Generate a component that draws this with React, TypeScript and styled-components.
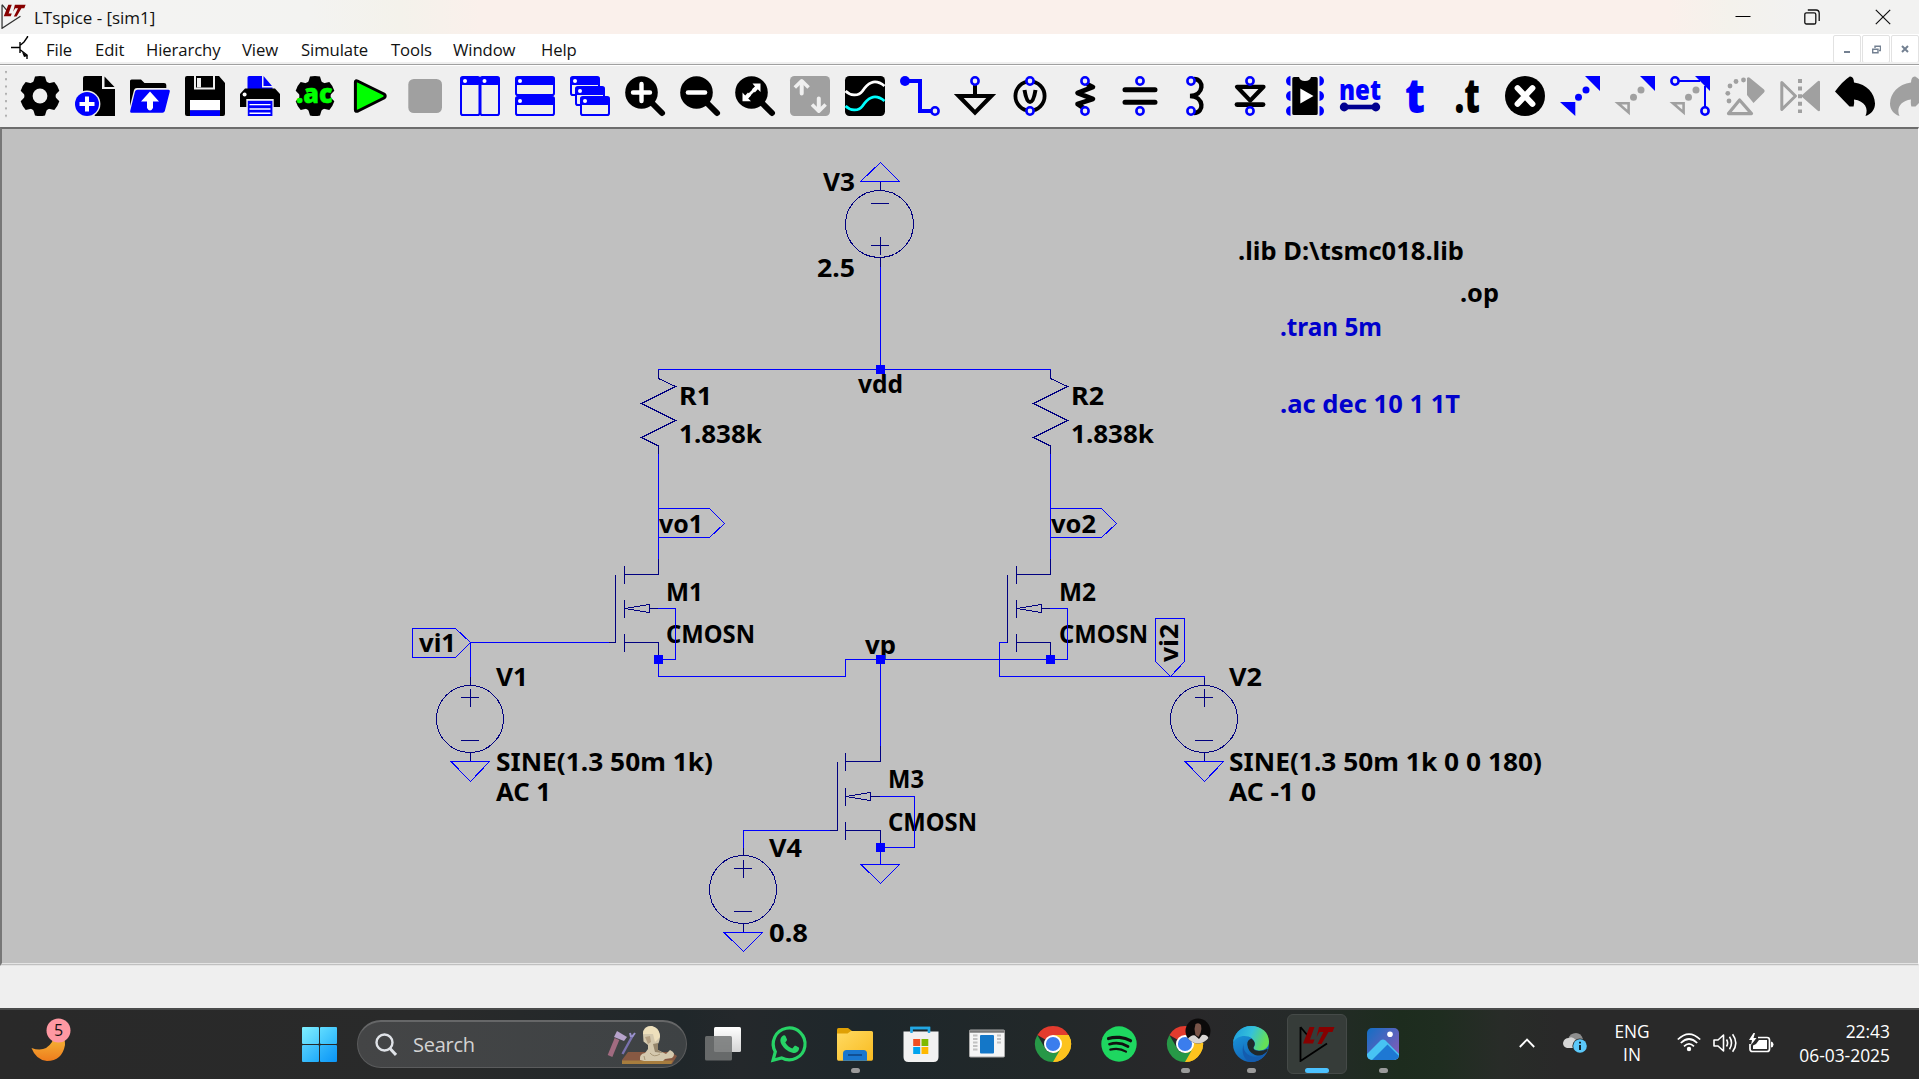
import React from 'react';
import styled, { createGlobalStyle } from 'styled-components';

const BLUE = '#0000ff';
const NAVY = '#000080';
const GREY = '#a0a0a0';
const FACE = '#efefef';
const UI_FONT = '"Open Sans", "Noto Sans", sans-serif';

const GlobalStyle = createGlobalStyle`
  * { box-sizing: border-box; }
  html, body { margin: 0; padding: 0; overflow: hidden; background: ${FACE}; }
  svg { display: block; flex: none; }
`;

const Desktop = styled.div`
  width: 1919px;
  height: 1079px;
  display: grid;
  grid-template-rows: 34px 28px 4px 61px 839px 42px 71px;
  grid-template-columns: 1919px;
  overflow: hidden;
  font-family: ${UI_FONT};
  background: ${FACE};
`;

/* ---------- title bar and menu ---------- */

const TitleBar = styled.header`
  display: flex;
  align-items: center;
  background: linear-gradient(90deg, #f3f3f3 0, #f3f3f1 310px, #f4f2eb 400px, #faf0eb 480px, #faf0eb 1670px, #f4f2ec 1730px, #f2f2f1 1800px);
`;

const AppMark = styled.div`
  width: 34px;
  height: 34px;
  padding: 4px 0 0 1px;
`;

const TitleText = styled.div`
  flex: 1;
  font-size: 17px;
  line-height: 34px;
  color: #111;
  letter-spacing: -0.05px;
  padding-top: 1px;
`;

const WindowButton = styled.div<{ $w: number }>`
  width: ${(p) => p.$w}px;
  height: 34px;
  display: flex;
  align-items: center;
  justify-content: center;
`;

const MenuBar = styled.nav`
  display: flex;
  align-items: flex-start;
  background: #fff;
`;

const MenuMark = styled.div`
  width: 46px;
  height: 28px;
  padding: 2px 0 0 11px;
`;

const MenuItem = styled.div<{ $w: number }>`
  width: ${(p) => p.$w}px;
  font-size: 16.7px;
  line-height: 31px;
  color: #111;
  white-space: nowrap;
  letter-spacing: -0.1px;
`;

const Spacer = styled.div`
  flex: 1;
`;

const MdiButtons = styled.div`
  display: flex;
  gap: 1px;
  padding-top: 1px;
`;

const MdiButton = styled.div`
  width: 28px;
  height: 28px;
  border: 1px solid #e2e2e2;
  border-radius: 2px;
  background: #fff;
  display: flex;
  align-items: center;
  justify-content: center;
`;

const Groove = styled.div`
  border-bottom: 1px solid #fff;
  background: linear-gradient(${FACE} 0 2px, ${GREY} 2px 3px);
`;

/* ---------- toolbar ---------- */

const ToolBar = styled.div`
  display: flex;
  align-items: flex-start;
  padding: 10px 0 0 4px;
  overflow: hidden;
  background: ${FACE};
`;

const Grip = styled.div`
  width: 16px;
  height: 52px;
  margin-top: -6px;
  flex: none;
  background: radial-gradient(circle at 2px 2px, #b0b0b0 0 1px, transparent 1.4px) 0 0 / 16px 7.3px repeat-y;
`;

const ToolButton = styled.div`
  width: 40px;
  height: 40px;
  margin-right: 15px;
  flex: none;
`;

const IconText = styled.text`
  font-family: 'Open Sans', sans-serif;
  font-weight: 800;
`;

function Icon({ children }: { children: React.ReactNode }) {
  return (
    <svg width="40" height="40" viewBox="0 0 40 40" fill="none" overflow="visible">
      {children}
    </svg>
  );
}

const Gear = () => (
  <g fill="#000">
    <circle cx="20" cy="20" r="15.7" />
    {[0, 60, 120, 180, 240, 300].map((a) => (
      <path key={a} d="M15 0.6Q20 -0.6 25 0.6L27 7H13Z" transform={`rotate(${a} 20 20)`} />
    ))}
  </g>
);

const Pin = ({ x, y }: { x: number; y: number }) => (
  <ellipse cx={x} cy={y} rx="3.6" ry="3.7" fill={FACE} stroke={BLUE} strokeWidth="2.6" />
);

const MiniWindow = ({ x, y, w, h }: { x: number; y: number; w: number; h: number }) => (
  <g>
    <rect x={x + 1} y={y + 1} width={w - 2} height={h - 2} rx="1.8" fill={FACE} stroke={BLUE} strokeWidth="2" />
    <rect x={x + 1} y={y + 1} width={w - 2} height="8" rx="1.5" fill={BLUE} />
    <circle cx={x + 5} cy={y + 5} r="2" fill="#fff" />
  </g>
);

const Lens = () => (
  <g>
    <path d="M27 27L37 37" stroke="#000" strokeWidth="6" strokeLinecap="round" />
    <circle cx="16.5" cy="16.5" r="16.3" fill="#000" />
  </g>
);

const Dots = ({ color }: { color: string }) => (
  <g fill={color}>
    <circle cx="18.5" cy="21.2" r="3.5" />
    <circle cx="26" cy="14" r="3.5" />
  </g>
);

const UndoShape = ({ color }: { color: string }) => (
  <path d="M0 15.6Q7 5.5 14.8 0.4Q18.8 0 19 6.6C32 8.5 39.5 17 40 27.5C40 33.5 36.5 38 30.5 40C33.8 33 30 25 19 23.6Q19.6 28 18.6 30.4L14.5 30.6Z" fill={color} />
);

const tools: React.ReactNode[] = [
  <><Gear /><circle cx="20" cy="20" r="7.4" fill={FACE} /></>,
  <>
    <path d="M8 2Q8 0 10 0H27V13H40V40H20L8 22Z" fill="#000" />
    <path d="M29.5 0.5L39.5 11H29.5Z" fill="#000" />
    <circle cx="12" cy="28" r="13.4" fill={FACE} />
    <circle cx="12" cy="28" r="12" fill={BLUE} />
    <path d="M12 20.5V35.5M4.5 28H19.5" stroke="#fff" strokeWidth="4" />
  </>,
  <>
    <path d="M0 5Q0 3.4 1.6 3.4H11L14.5 7H34Q36.3 7 36.3 9V12H7Q4.5 12 4 14L0 30Z" fill="#000" />
    <path d="M7.5 13.8H38.5Q40.2 13.8 39.8 15.5L34.8 35Q34.3 36.8 32.5 36.8H1.2Q-0.3 36.8 0.2 35L5 15.5Q5.5 13.8 7.5 13.8Z" fill={BLUE} />
    <path d="M20 15.5L29 25.5H23V32Q20 37 17 32V25.5H11Z" fill="#fff" />
  </>,
  <>
    <path d="M0 2Q0 0 2 0H34L40 7V38Q40 40 38 40H2Q0 40 0 38Z" fill="#000" />
    <path d="M9 0V13.4H30V0H28V11.4H11V0Z" fill={FACE} />
    <rect x="12" y="2" width="4" height="9.4" fill={FACE} />
    <rect x="5" y="24" width="30" height="10.5" fill="#fff" />
    <rect x="5" y="34.3" width="30" height="5.7" fill={BLUE} />
  </>,
  <>
    <path d="M7.5 13V1.5Q7.5 0 9 0H22V11.5H32.5V13Z" fill={BLUE} />
    <path d="M23.5 0L32 10H23.5Z" fill={BLUE} />
    <path d="M5 12.5H35L40 18V31H0V18Z" fill="#000" />
    <circle cx="4.6" cy="18.5" r="2" fill="#fff" />
    <rect x="6.3" y="23" width="27.4" height="17" fill={FACE} />
    <rect x="7.8" y="24.8" width="24.6" height="15.2" fill={BLUE} />
    <path d="M9.5 28.6H30.5M9.5 33H30.5M9.5 37.2H30.5" stroke="#fff" strokeWidth="1.4" />
  </>,
  <>
    <Gear />
    <IconText x="1" y="27.3" fontSize="27" fill="#00ff00" stroke="#00ff00" strokeWidth="0.5" textLength="36.5" lengthAdjust="spacingAndGlyphs">.ac</IconText>
  </>,
  <path d="M5.4 6Q5.4 4 7.5 5L34 18Q36.5 20 34 22L8 35Q5.4 36 5.4 34Z" fill="#00ff00" stroke="#000" strokeWidth="3" strokeLinejoin="round" />,
  <rect x="3.3" y="3" width="33.7" height="34" rx="5.5" fill={GREY} />,
  <><MiniWindow x={0} y={0} w={20.5} h={40} /><MiniWindow x={19.5} y={0} w={20.5} h={40} /></>,
  <><MiniWindow x={0} y={0} w={40} h={20} /><MiniWindow x={0} y={20} w={40} h={20} /></>,
  <><MiniWindow x={0} y={0} w={30} h={20} /><MiniWindow x={5} y={10} w={30} h={20} /><MiniWindow x={10} y={20} w={30} h={20} /></>,
  <><Lens /><path d="M16.5 8V25M8 16.5H25" stroke="#fff" strokeWidth="4.4" strokeLinecap="round" /></>,
  <><Lens /><path d="M8 16.5H25" stroke="#fff" strokeWidth="4.6" strokeLinecap="round" /></>,
  <>
    <Lens />
    <path d="M11 22L22 11" stroke="#fff" strokeWidth="2.8" />
    <path d="M17.5 7.5H25.5V16L22.8 13.2L19.8 16.4L17 13.2L20 10.4ZM7.5 16.5V25.3H16L13.2 22.5L16 19.4L13 16.6L10.2 19.4Z" fill="#fff" />
  </>,
  <>
    <rect width="40" height="40" rx="4.5" fill={GREY} />
    <path d="M11.7 6V17.5M28.8 22.5V34" stroke={FACE} strokeWidth="4" strokeLinecap="round" />
    <path d="M4.8 11.5L11.7 4.8L18.6 11.5M22 28.5L28.8 35.2L35.6 28.5" stroke={FACE} strokeWidth="3.6" strokeLinejoin="round" />
  </>,
  <>
    <rect width="40" height="40" rx="4.5" fill="#000" />
    <path d="M0.5 15C5 19.5 13 21 17.5 15C22 8 29 1.5 39.5 10" stroke="#fff" strokeWidth="2.8" />
    <path d="M0.5 30C5 34.5 13 36 17.5 30C22 23 29 16.5 39.5 25" stroke="#00ffff" strokeWidth="2.8" />
  </>,
  <>
    <path d="M5 5H20V35H32" stroke={BLUE} strokeWidth="4" />
    <circle cx="5" cy="5" r="5" fill={BLUE} />
    <Pin x={35} y={35} />
  </>,
  <>
    <path d="M20 9V20" stroke="#000" strokeWidth="4" />
    <path d="M3.8 20H36.2L20 36.6Z" stroke="#000" strokeWidth="4.2" />
    <Pin x={20} y={5} />
  </>,
  <>
    <circle cx="20" cy="20" r="14.6" stroke="#000" strokeWidth="3.8" />
    <path d="M14.5 14Q16.5 26 20 26Q23.5 26 25.5 14" stroke="#000" strokeWidth="4" />
    <Pin x={20} y={5} /><Pin x={20} y={35} />
  </>,
  <>
    <path d="M22 8L28 11L12.5 17L28 23L12.5 28L20 33" stroke="#000" strokeWidth="4.6" strokeLinejoin="round" />
    <Pin x={20} y={5} /><Pin x={20} y={35} />
  </>,
  <>
    <path d="M5 13.8H35M5 26.3H35" stroke="#000" strokeWidth="5" strokeLinecap="round" />
    <Pin x={20} y={5} /><Pin x={20} y={35} />
  </>,
  <>
    <path d="M19 3C29.5 3 29.5 19.5 15 20C29.5 20.5 29.5 37 19 37" stroke="#000" strokeWidth="4.4" />
    <Pin x={16} y={5} /><Pin x={16} y={35} />
  </>,
  <>
    <path d="M7 10.8H33.5L20.2 24.6Z" stroke="#000" strokeWidth="4.2" strokeLinejoin="round" />
    <path d="M7 28.6H33" stroke="#000" strokeWidth="4.8" strokeLinecap="round" />
    <Pin x={20} y={5} /><Pin x={20} y={35} />
  </>,
  <>
    {[5, 20, 35].map((y) => (
      <g key={y} fill={BLUE}>
        <circle cx="6" cy={y} r="5" />
        <circle cx="34" cy={y} r="5" />
      </g>
    ))}
    <rect x="5.5" width="29" height="40" fill={FACE} />
    <path d="M7.3 2.5Q7.3 1 9 1H14Q15 5 20 5Q25 5 26 1H31Q32.7 1 32.7 2.5V37.5Q32.7 39 31 39H9Q7.3 39 7.3 37.5Z" fill="#000" />
    <path d="M15.3 12.5L28.5 20L15.3 27.5Z" fill="#fff" />
  </>,
  <>
    <IconText x="-1" y="24" fontSize="27.5" fill={BLUE} textLength="42" lengthAdjust="spacingAndGlyphs">net</IconText>
    <path d="M4 31H36" stroke="#000090" strokeWidth="4.6" />
    <g fill="#000090"><circle cx="4.2" cy="31" r="4.4" /><circle cx="35.8" cy="31" r="4.4" /></g>
  </>,
  <IconText x="10" y="36.5" fontSize="48" fill={BLUE} textLength="20" lengthAdjust="spacingAndGlyphs">t</IconText>,
  <IconText x="4.5" y="36.5" fontSize="48" fill="#000" textLength="25.5" lengthAdjust="spacingAndGlyphs">.t</IconText>,
  <>
    <circle cx="20" cy="20" r="20" fill="#000" />
    <path d="M12.5 12L27.5 28M27.5 12L12.5 28" stroke="#fff" strokeWidth="5.8" strokeLinecap="round" />
  </>,
  <><path d="M0 26H15.3V40ZM25 0H40V15Z" fill={BLUE} /><Dots color={BLUE} /></>,
  <>
    <path d="M3 27.2H13.6V36.4Z" stroke={GREY} strokeWidth="2.6" />
    <path d="M25 0H40V15Z" fill={BLUE} />
    <Dots color={GREY} />
  </>,
  <>
    <path d="M3 27.2H13.6V36.4Z" stroke={GREY} strokeWidth="2.6" />
    <path d="M25 0H40V15Z" fill={BLUE} />
    <path d="M8 5H30M35 10V32" stroke={BLUE} strokeWidth="2" />
    <Dots color={GREY} />
    <Pin x={5} y={5} /><Pin x={35} y={35} />
  </>,
  <>
    <path d="M22 2Q23.5 0.4 25 2L39 13.5Q40.5 15 39 16.5L28.5 27L22 19Z" fill={GREY} />
    <path d="M3.5 37.6L14.6 24L26.5 37.6Z" stroke={GREY} strokeWidth="3.2" strokeLinejoin="round" />
    <g fill={GREY}>
      {[[18.5, 4], [11, 5.5], [5, 10], [2.8, 17.3], [4, 25]].map(([x, y]) => <circle key={x} cx={x} cy={y} r="2.4" />)}
    </g>
  </>,
  <>
    <path d="M1.8 6.5L15.5 20L1.8 33.5Z" stroke={GREY} strokeWidth="3" strokeLinejoin="round" />
    <path d="M40 5.5V34.5Q39 36 37.5 34.5L21 20L37.5 5.5Q39 4 40 5.5Z" fill={GREY} />
    <path d="M20 3V37" stroke={GREY} strokeWidth="4" strokeDasharray="4 3.6" />
  </>,
  <UndoShape color="#000" />,
  <g transform="translate(40 0) scale(-1 1)"><UndoShape color={GREY} /></g>,
];

/* ---------- schematic ---------- */

const Sheet = styled.main`
  border-left: 2px solid #777;
  border-top: 2px solid #6c6c6c;
  border-right: 1px solid #fff;
  border-bottom: 3px double #e4e4e4;
  background: #c0c0c0;
  overflow: hidden;
`;

const Drawing = styled.svg`
  shape-rendering: crispEdges;
  fill: none;
  stroke-width: 1;
`;

const Label = styled.text`
  font-family: 'Noto Sans', 'Open Sans', sans-serif;
  font-weight: 700;
  font-size: 25px;
  stroke: none;
`;

const Wire = styled.path`
  stroke: ${BLUE};
`;

const Part = styled.path`
  stroke: ${NAVY};
`;

const labels: { t: string; x: number; y: number; w: number; c?: string }[] = [
  { t: 'V3', x: 823, y: 191, w: 30 },
  { t: '2.5', x: 817, y: 277, w: 36 },
  { t: 'vdd', x: 858, y: 393, w: 43 },
  { t: 'R1', x: 679, y: 405, w: 31 },
  { t: '1.838k', x: 679, y: 443, w: 81 },
  { t: 'R2', x: 1071, y: 405, w: 31 },
  { t: '1.838k', x: 1071, y: 443, w: 81 },
  { t: 'vo1', x: 659, y: 533, w: 42 },
  { t: 'vo2', x: 1051, y: 533, w: 43 },
  { t: 'M1', x: 666, y: 601, w: 35 },
  { t: 'CMOSN', x: 666, y: 643, w: 87 },
  { t: 'M2', x: 1059, y: 601, w: 35 },
  { t: 'CMOSN', x: 1059, y: 643, w: 87 },
  { t: 'vi1', x: 419, y: 652, w: 35 },
  { t: 'vp', x: 865, y: 654, w: 29 },
  { t: 'V1', x: 496, y: 686, w: 30 },
  { t: 'SINE(1.3 50m 1k)', x: 496, y: 771, w: 215 },
  { t: 'AC 1', x: 496, y: 801, w: 53 },
  { t: 'M3', x: 888, y: 788, w: 34 },
  { t: 'CMOSN', x: 888, y: 831, w: 87 },
  { t: 'V2', x: 1229, y: 686, w: 31 },
  { t: 'SINE(1.3 50m 1k 0 0 180)', x: 1229, y: 771, w: 311 },
  { t: 'AC -1 0', x: 1229, y: 801, w: 85 },
  { t: 'V4', x: 769, y: 857, w: 31 },
  { t: '0.8', x: 769, y: 942, w: 37 },
  { t: '.lib D:\\tsmc018.lib', x: 1238, y: 260, w: 224 },
  { t: '.op', x: 1460, y: 302, w: 37 },
  { t: '.tran 5m', x: 1280, y: 336, w: 100, c: '#0000cc' },
  { t: '.ac dec 10 1 1T', x: 1280, y: 413, w: 178, c: '#0000cc' },
];

const Junction = ({ x, y }: { x: number; y: number }) => <rect x={x - 4.5} y={y - 4.5} width="9" height="9" fill={BLUE} />;

const Ground = ({ x, y, h = 20 }: { x: number; y: number; h?: number }) => <Wire d={`M${x - 19.5} ${y}H${x + 19}L${x} ${y + h}Z`} />;

const Source = ({ x, y, ry = 33.5 }: { x: number; y: number; ry?: number }) => (
  <g>
    <ellipse cx={x - 0.5} cy={y} rx="33.5" ry={ry} stroke={NAVY} />
    <Part d={`M${x - 9.5} ${y - 21.5}H${x + 8.5}M${x} ${y - 30}V${y - 12}M${x - 9.5} ${y + 21.5}H${x + 8.5}M${x} ${y + ry}V${y + ry + 9}`} />
  </g>
);

const Resistor = ({ x }: { x: number }) => (
  <Part d={`M${x} 370V378.5L${x + 17} 386.5L${x - 17} 403.5L${x + 17} 420.5L${x - 17} 437.5L${x} 446V454`} />
);

const Mosfet = ({ x, y, p, gate, plate = 9 }: { x: number; y: number; p: number; gate: number; plate?: number }) => {
  const t = x - gate;
  const low = Math.floor(y + 2 * p) + 0.5;
  const mid = Math.floor(y + p) + 0.5;
  return (
    <Part
      d={`M${x} ${y - 16}V${y}H${t}M${t} ${y - 9}V${y + 9}M${t} ${mid - 9}V${mid + 9}M${t} ${low - 9}V${low + 9}
        M${t - plate} ${y}V${low}M${t - 17} ${low}H${t - plate + 0.5}M${t} ${low}H${x}V${low + 14}
        M${t} ${mid}L${t + 25} ${mid - 4}V${mid + 4}ZM${t + 25} ${mid}H${x}`}
    />
  );
};

const Schematic = () => (
  <Drawing width="1916" height="834" viewBox="2 129 1916 834">
    {labels.map((l) => (
      <Label key={`${l.t}-${l.x}`} x={l.x} y={l.y + 0.3} fill={l.c ?? '#000'} textLength={l.w + 2} lengthAdjust="spacingAndGlyphs">
        {l.t}
      </Label>
    ))}
    <Label transform="translate(1178 662) rotate(-90)" fill="#000" textLength="38" lengthAdjust="spacingAndGlyphs">vi2</Label>

    <Wire d="M860.5 181.5H899.5L880.5 162.5Z" />
    <Part d="M880.5 182V190M871 203.5H889M871 245.5H889M880.5 237V255M880.5 257V267" />
    <ellipse cx="879.5" cy="224" rx="34" ry="33.5" stroke={NAVY} />
    <Wire d="M880.5 267V369.5M658.5 378V369.5H1050.5V378" />
    <Resistor x={658.5} />
    <Resistor x={1050.5} />
    <Wire d="M658.5 454V559M1050.5 454V559" />
    <Wire d="M658.5 508.5H709.5L724.5 523.5L709.5 537.5H658.5M1050.5 508.5H1101.5L1116.5 523.5L1101.5 537.5H1050.5" />
    <Mosfet x={658.5} y={574.5} p={34} gate={34} />
    <Mosfet x={1050.5} y={574.5} p={34} gate={34} />
    <Mosfet x={880.5} y={761.5} p={34.5} gate={35} plate={8} />
    <Wire d="M658 608.5H675.5V659.5H658.5M1050 608.5H1067.5V659.5" />
    <Wire d="M658.5 659.5V676.5H845.5V659.5H1067.5" />
    <Wire d="M412.5 628.5H455.5L470.5 642.5L455.5 657.5H412.5Z" />
    <Wire d="M609 642.5H470.5V677" />
    <Part d="M470.5 677V686M743.5 847V856M1204.5 677V686" />
    <Source x={470.5} y={719} />
    <Ground x={470.5} y={761.5} />
    <Wire d="M1007 642.5H999.5V676.5H1204.5V678" />
    <Wire d="M1155.5 618.5H1184.5V661.5L1170.5 676.5L1155.5 661.5Z" />
    <Source x={1204.5} y={719} />
    <Ground x={1204.5} y={761.5} />
    <Wire d="M880.5 659.5V746M880 796.5H914.5V847.5H880.5V864.5" />
    <Ground x={880.5} y={864.5} h={19} />
    <Wire d="M830 830.5H743.5V848" />
    <Source x={743.5} y={889.5} ry={34} />
    <Ground x={743.5} y={932.5} h={19} />
    <Junction x={880.5} y={369.5} />
    <Junction x={658.5} y={659.5} />
    <Junction x={880.5} y={659.5} />
    <Junction x={1050.5} y={659.5} />
    <Junction x={880.5} y={847.5} />
  </Drawing>
);

const StatusBar = styled.div`
  background: ${FACE};
`;

/* ---------- taskbar ---------- */

const TaskBar = styled.footer`
  display: flex;
  border-top: 2px solid #4a4b4b;
  background: linear-gradient(90deg, #292929 0, #292a2a 440px, #20272a 680px, #24282b 740px, #1e272b 870px, #222829 1050px, #29282a 1190px, #252a29 1300px, #1d2c1e 1400px, #1f2d20 1440px, #282c28 1500px, #292929 1560px);
`;

const Widget = styled.div`
  width: 302px;
  padding: 10px 0 0 28px;
`;

const BadgeText = styled.text`
  font-family: ${UI_FONT};
  font-size: 16px;
  fill: #111;
`;

const StartButton = styled.div`
  width: 35px;
  height: 35px;
  margin: 17px 20px 0 0;
  display: grid;
  grid-template-columns: 1fr 1fr;
  gap: 1px;
`;

const Pane = styled.div<{ $from: string; $to: string }>`
  border-radius: 1px;
  background: linear-gradient(135deg, ${(p) => p.$from}, ${(p) => p.$to});
`;

const SearchBox = styled.div`
  width: 330px;
  height: 48px;
  margin: 10px 3px 0 0;
  padding: 0 8px 0 17px;
  border: 1px solid #5b5c5d;
  border-top: 2px solid #666768;
  border-radius: 24px;
  background: linear-gradient(90deg, #444546, #3e4244);
  display: flex;
  align-items: center;
  color: #d3d3d3;
  font-size: 20px;
`;

const SearchLabel = styled.span`
  flex: 1;
  padding: 0 0 1px 16px;
  letter-spacing: -0.25px;
`;

const TaskButton = styled.div<{ $active?: boolean }>`
  width: 60px;
  height: 60px;
  margin: 4px 3px 0;
  flex: none;
  border-radius: 6px;
  border: 1px solid ${(p) => (p.$active ? '#454a48' : 'transparent')};
  background: ${(p) => (p.$active ? '#363c39' : 'transparent')};
  display: flex;
  flex-direction: column;
  align-items: center;
  padding-top: 8px;
`;

const Indicator = styled.div<{ $active?: boolean }>`
  width: ${(p) => (p.$active ? 24 : 9)}px;
  height: 5px;
  margin-top: 3px;
  border-radius: 3px;
  background: ${(p) => (p.$active ? '#4cc2ff' : '#9b9b9b')};
`;

const Tray = styled.div`
  margin-left: auto;
  width: 406px;
  padding: 0 29px 4px 6px;
  display: flex;
  align-items: center;
  color: #fff;
`;

const TrayIcon = styled.div<{ $right: number }>`
  margin-right: ${(p) => p.$right}px;
`;

const Language = styled.div`
  width: 40px;
  margin-right: 25px;
  text-align: center;
  font-size: 17.3px;
  line-height: 23px;
`;

const Clock = styled.div`
  flex: 1;
  display: flex;
  flex-direction: column;
  align-items: flex-end;
  font-size: 17.4px;
  line-height: 24px;
  white-space: nowrap;
  padding-top: 1px;
`;

const LtLogo = ({ size, dark }: { size: number; dark?: boolean }) => (
  <svg width={size} height={size} viewBox="0 0 36 36">
    <path d="M1.5 1V35L28 17.5M1.5 1L9 10" fill="none" stroke={dark ? '#000' : '#333'} strokeWidth="1.8" />
    <path d="M10.5 1H15.5L11 13.5H15.5L14 17.5H4Z" fill="#870000" />
    <path d="M20 1H35.5L33.5 6H29.5L22.5 18H18.5L24.5 6H20.5L17.5 11Z" fill="#870000" />
  </svg>
);

const Chrome = () => (
  <g>
    <path d="M18 18L2.4 9A18 18 0 0 1 33.6 9Z" fill="#e33b2e" />
    <path d="M18 18L33.6 9A18 18 0 0 1 18 36Z" fill="#fcc31e" />
    <path d="M18 9H33.6A18 18 0 0 1 18 36L25.8 22.5Z" fill="#fcc31e" />
    <path d="M18 36A18 18 0 0 1 2.4 9L10.2 22.5A9 9 0 0 0 25.8 22.5Z" fill="#279847" />
    <circle cx="18" cy="18" r="9" fill="#fff" />
    <circle cx="18" cy="18" r="7.1" fill="#3b7ded" />
  </g>
);

const apps: { name: string; running?: boolean; active?: boolean; art: React.ReactNode }[] = [
  {
    name: 'task-view',
    art: (
      <>
        <defs><linearGradient id="tv" x2="0" y2="1"><stop stopColor="#fff" /><stop offset="1" stopColor="#d4d4d4" /></linearGradient></defs>
        <rect x="9" y="1" width="27" height="25" rx="1.5" fill="url(#tv)" />
        <rect y="10" width="27" height="24.5" rx="1.5" fill="#737575" opacity="0.85" />
      </>
    ),
  },
  {
    name: 'whatsapp',
    art: (
      <>
        <path d="M2 34.3L4.3 25.7A15.9 15.9 0 1 1 10.6 31.9Z" fill="none" stroke="#27d366" strokeWidth="3.2" />
        <path d="M11.2 10.2C12.5 8.7 14 8.9 14.5 10L16 13.5C16.2 14.5 15 15.5 14.3 16.4C16 19.4 18.2 21.3 21.3 22.5L23.3 20.2C24 19.5 25 20 27 21C28.4 21.7 28.2 22 27.9 23.6C27.2 26.2 24.5 27.3 22.3 26.9C16 25.7 11.3 21 9.7 16.5C8.9 14 9.6 11.8 11.2 10.2Z" fill="#27d366" />
      </>
    ),
  },
  {
    name: 'explorer',
    running: true,
    art: (
      <>
        <defs><linearGradient id="fe" x2="1" y2="1"><stop stopColor="#ffda62" /><stop offset="1" stopColor="#f9bb20" /></linearGradient></defs>
        <path d="M0 3.5Q0 2 1.5 2H11L15 5L11 9H0Z" fill="#dfa005" />
        <path d="M0 7.5H10.5L14 5H34.5Q36 5 36 6.5V33Q36 34.7 34.5 34.7H1.5Q0 34.7 0 33Z" fill="url(#fe)" />
        <path d="M6 34.7V27.5Q6 24 9.5 24H26.5Q30 24 30 27.5V34.7Z" fill="#1a77cf" />
        <path d="M11 29H25" stroke="#104f94" strokeWidth="2" />
      </>
    ),
  },
  {
    name: 'store',
    art: (
      <>
        <path d="M8.5 9V2H26V9" fill="none" stroke="#22a7e4" strokeWidth="2.4" />
        <path d="M0.5 5.5H35.5V31Q35.5 36 30.5 36H5.5Q0.5 36 0.5 31Z" fill="#f1f1f1" />
        <path d="M10.2 13H17.2V20H10.2Z" fill="#f14f21" /><path d="M18.5 13H25.3V20H18.5Z" fill="#7eb900" />
        <path d="M10.2 21H17.2V28H10.2Z" fill="#00a3ee" /><path d="M18.5 21H25.3V28H18.5Z" fill="#feb800" />
        <path d="M8.5 7V2H26V7" fill="none" stroke="#22a7e4" strokeWidth="2.4" />
      </>
    ),
  },
  {
    name: 'window',
    art: (
      <>
        <rect x="0.5" y="4" width="35" height="27" rx="1" fill="#f5f5f5" stroke="#aaa" />
        <path d="M0.5 5.5H35.5" stroke="#777" strokeWidth="2.5" />
        <rect x="11" y="9" width="14" height="18.5" rx="1" fill="#1477c8" />
        <path d="M4 9.5H8.5M4 13H8.5M4 16.5H8.5M4 20H8.5M4 23.5H8.5M28 9.5H32M28 13H32M28 16.5H32" stroke="#c2c2c2" strokeWidth="2" />
      </>
    ),
  },
  { name: 'chrome', art: <Chrome /> },
  {
    name: 'spotify',
    art: (
      <>
        <circle cx="18" cy="18" r="17.7" fill="#1ed760" />
        <path d="M7.5 12.5C14 10.5 23 11 29.5 14.7" stroke="#111" strokeWidth="3.2" fill="none" strokeLinecap="round" />
        <path d="M8.5 18.2C14 16.6 21.5 17.3 27 20.5" stroke="#111" strokeWidth="2.7" fill="none" strokeLinecap="round" />
        <path d="M9.3 23.6C14 22.4 20.5 22.8 25 25.6" stroke="#111" strokeWidth="2.2" fill="none" strokeLinecap="round" />
      </>
    ),
  },
  {
    name: 'chrome-profile',
    running: true,
    art: (
      <>
        <defs><clipPath id="avatar"><circle cx="31" cy="5" r="12.5" /></clipPath></defs>
        <Chrome />
        <g clipPath="url(#avatar)">
          <rect x="18" y="-8" width="26" height="26" fill="#0c0a0a" />
          <path d="M20 14Q24 8.5 28 9.5L32 13L35 9Q40 8 42 13V18H20Z" fill="#d9d5d3" />
          <path d="M28.5 -2Q32 -4 34 -1Q35 3 33.5 7L31.5 11L28.5 9L27.5 3Z" fill="#7a5549" />
        </g>
      </>
    ),
  },
  {
    name: 'edge',
    running: true,
    art: (
      <>
        <defs>
          <linearGradient id="ea" x2="1" y2="0.3"><stop stopColor="#1a9ade" /><stop offset="0.55" stopColor="#35c1da" /><stop offset="1" stopColor="#65df58" /></linearGradient>
          <linearGradient id="eb" x2="0.5" y2="1"><stop stopColor="#1b9fe0" /><stop offset="1" stopColor="#1263b7" /></linearGradient>
        </defs>
        <circle cx="18" cy="18" r="18" fill="url(#eb)" />
        <path d="M0 17C1 7 9 0 18 0C29 0 36 7 36 15.5C36 21 32 24.5 27 24.5C23 24.5 20 23 20.5 21.5C22.5 19.5 22.5 15.5 19 12.5C13 8 3 10 0 17Z" fill="url(#ea)" />
        <path d="M14.3 18.5Q14 14 18.5 12.5Q24 17 20.5 21.5Q20 24.5 26 25Q31 25 34 23Q35.5 22.5 34 25.5Q30 31 22 29Q15 26 14.3 18.5Z" fill="#20282b" />
        <path d="M11 17.5C9 24 14 30.5 22 31C28 31 31 28 34 25.5C31 32 25 36 18 36C11 35 7.5 25 11 17.5Z" fill="#145cae" />
      </>
    ),
  },
  { name: 'ltspice', running: true, active: true, art: <LtLogo size={36} dark /> },
  {
    name: 'photos',
    running: true,
    art: (
      <>
        <defs>
          <linearGradient id="ph" x2="1" y2="0.8"><stop stopColor="#116fc5" /><stop offset="1" stopColor="#835bb8" /></linearGradient>
          <clipPath id="pc"><rect x="2" y="2" width="32" height="32" rx="5" /></clipPath>
        </defs>
        <g clipPath="url(#pc)">
          <rect x="2" y="2" width="32" height="32" fill="url(#ph)" />
          <path d="M2 28L15.5 14.5Q18 12.5 20.5 14.5L36 30V36H2Z" fill="#47c3f3" />
          <path d="M7 34L22.5 18.5L36 32V36H7Z" fill="#1e78d3" />
        </g>
        <circle cx="25" cy="8.2" r="2.8" fill="#fff" />
      </>
    ),
  },
];

const SearchArt = () => (
  <svg width="72" height="40" viewBox="0 0 72 40">
    <path d="M4 31L11 14" stroke="#a16b80" strokeWidth="5" />
    <path d="M11 6L21 12L18 16L8 12Z" fill="#b7a3cb" />
    <path d="M16.5 29L27 10" stroke="#7a72ae" strokeWidth="2.4" />
    <path d="M25 12L24 8M26 12L29 8" stroke="#9991cc" strokeWidth="2" />
    <path d="M22 27H65L71 31L66 39H16V35Z" fill="#875943" />
    <path d="M16 35.5H67L65 39H16Z" fill="#a77d3e" />
    <path d="M34 35Q33 29 39 28L42 24V20L37.5 16.5L37 9Q37 1 45 1Q53 2 54 10Q54 16 52 19V25L60 29L64 25Q71 28 66 33L59 34L57 36H38Z" fill="#d4c9ae" />
    <path d="M37 9Q38 1 46 1Q54 4 54 12L49 17L47 9Z" fill="#eee0bc" />
    <path d="M39 12L44 11L45 17L42 19Z" fill="#b4a083" />
    <path d="M47 19L52 18V25L57 28L49 27Z" fill="#95866c" />
    <path d="M44 28Q48 33 54 29M38 31L39 35" stroke="#a89878" fill="none" />
  </svg>
);

const menus: [string, number][] = [
  ['File', 49], ['Edit', 51], ['Hierarchy', 96], ['View', 59], ['Simulate', 90], ['Tools', 62], ['Window', 88], ['Help', 60],
];

export default function App() {
  return (
    <>
      <GlobalStyle />
      <Desktop>
        <TitleBar>
          <AppMark><LtLogo size={25} /></AppMark>
          <TitleText>LTspice - [sim1]</TitleText>
          <WindowButton $w={69}>
            <svg width="16" height="16"><path d="M0.5 7.5H15.5" stroke="#000" /></svg>
          </WindowButton>
          <WindowButton $w={69}>
            <svg width="16" height="16" fill="none" stroke="#111" strokeWidth="1.3">
              <rect x="0.8" y="3.8" width="11" height="11.2" rx="1.6" />
              <path d="M3.8 1H12Q15.2 1 15.2 4.2V12" />
            </svg>
          </WindowButton>
          <WindowButton $w={73}>
            <svg width="16" height="16"><path d="M0.8 0.8L15.2 15.2M15.2 0.8L0.8 15.2" stroke="#111" strokeWidth="1.2" /></svg>
          </WindowButton>
        </TitleBar>
        <MenuBar>
          <MenuMark>
            <svg width="18" height="24" viewBox="0 0 18 24" fill="none" stroke="#000" strokeWidth="1.4">
              <path d="M0 11.5H9M9 6V17M9.5 9L13 6L16.5 1V0M9.5 14L16 19V23" />
              <path d="M11 16L17 20L13 21Z" fill="#000" stroke="none" />
            </svg>
          </MenuMark>
          {menus.map(([name, w]) => <MenuItem key={name} $w={w}>{name}</MenuItem>)}
          <Spacer />
          <MdiButtons>
            <MdiButton><svg width="8" height="10"><path d="M1 8H7" stroke="#738091" strokeWidth="2" /></svg></MdiButton>
            <MdiButton>
              <svg width="9" height="9" fill="none" stroke="#738091">
                <path d="M3 3V1.2H8.5V5.5H7" strokeWidth="1.4" /><path d="M0.7 4.3H6V7.8H0.7Z" strokeWidth="1.4" />
              </svg>
            </MdiButton>
            <MdiButton><svg width="8" height="8"><path d="M1 1L7 7M7 1L1 7" stroke="#738091" strokeWidth="2" /></svg></MdiButton>
          </MdiButtons>
        </MenuBar>
        <Groove />
        <ToolBar>
          <Grip />
          {tools.map((art, i) => <ToolButton key={i}><Icon>{art}</Icon></ToolButton>)}
        </ToolBar>
        <Sheet><Schematic /></Sheet>
        <StatusBar />
        <TaskBar>
          <Widget>
            <svg width="46" height="44" viewBox="28 1020 46 44" overflow="visible">
              <defs><linearGradient id="moon" x2="0" y2="1"><stop stopColor="#f6c33d" /><stop offset="1" stopColor="#ee7c1d" /></linearGradient></defs>
              <path d="M31.5 1048Q45 1053 52 1042Q54 1037 51 1032Q66 1034 65 1045Q62 1061 47 1061Q36 1060 31.5 1048Z" fill="url(#moon)" />
              <circle cx="58.5" cy="1030.5" r="12" fill="#fe98a2" />
              <BadgeText x="54" y="1036">5</BadgeText>
            </svg>
          </Widget>
          <StartButton>
            <Pane $from="#7eefff" $to="#4dcbfd" />
            <Pane $from="#60dcff" $to="#2db7fb" />
            <Pane $from="#54cefd" $to="#1fabfa" />
            <Pane $from="#34b9fb" $to="#0a95f7" />
          </StartButton>
          <SearchBox>
            <svg width="22" height="24" fill="none" stroke="#e0e3e8" strokeWidth="2.4">
              <circle cx="9.5" cy="9.5" r="8" /><path d="M15 15.5L21 22" strokeWidth="3" />
            </svg>
            <SearchLabel>Search</SearchLabel>
            <SearchArt />
          </SearchBox>
          {apps.map((a) => (
            <TaskButton key={a.name} $active={a.active}>
              <svg width="40" height="42" viewBox="-2 -3 40 42" overflow="visible">{a.art}</svg>
              {a.running && <Indicator $active={a.active} />}
            </TaskButton>
          ))}
          <Tray>
            <TrayIcon $right={28}>
              <svg width="16" height="10" fill="none" stroke="#fff" strokeWidth="1.8"><path d="M0.8 9L8 1.6L15.2 9" /></svg>
            </TrayIcon>
            <TrayIcon $right={25}>
              <svg width="24" height="22" viewBox="0 0 24 22">
                <path d="M5 7Q7 1 13 1Q18 1 20 7L18 13L8 14Z" fill="#8e8e8e" />
                <path d="M4 16Q0 15 0 11Q1 6 6 6Q9 4 13 8L18 11L10 16Z" fill="#d6d6d6" />
                <circle cx="17" cy="14" r="7.6" fill="#292929" /><circle cx="17" cy="14" r="6.8" fill="#5bc8fa" />
                <path d="M17 13V18M17 9.8V11.6" stroke="#14242c" strokeWidth="2" />
              </svg>
            </TrayIcon>
            <Language>ENG<br />IN</Language>
            <TrayIcon $right={12}>
              <svg width="24" height="19" viewBox="0 0 24 19" fill="none" stroke="#fff" strokeWidth="1.7">
                <path d="M0.8 6.5Q12 -4.3 23.2 6.5M3.8 10Q12 2 20.2 10M7 13.3Q12 8.3 17 13.3" /><circle cx="12" cy="16" r="2.2" fill="#fff" stroke="none" />
              </svg>
            </TrayIcon>
            <TrayIcon $right={11}>
              <svg width="25" height="20" viewBox="0 0 25 20" fill="none" stroke="#fff" strokeWidth="1.6">
                <path d="M1 7H5L10.5 2V18L5 13H1Z" strokeLinejoin="round" /><path d="M13.5 6.5Q15.7 10 13.5 13.5M16.5 3.8Q20.5 10 16.5 16.2M19.6 1.2Q26 10 19.6 18.8" />
              </svg>
            </TrayIcon>
            <TrayIcon $right={10}>
              <svg width="25" height="20" viewBox="0 0 25 20">
                <path d="M9 4.5H18Q20.5 4.5 20.5 7V16Q20.5 18.5 18 18.5H3.5Q1 18.5 1 16V11" fill="none" stroke="#fff" strokeWidth="1.7" />
                <path d="M10 7H18V16H4V12.5L7 11Z" fill="#fff" /><path d="M22 8.5Q24.5 9 24.5 11.5Q24.5 14 22 14.5Z" fill="#fff" />
                <path d="M4.5 0L0 7H3L2 12L7.5 5H4.5L6 0Z" fill="#fff" />
              </svg>
            </TrayIcon>
            <Clock><span>22:43</span><span>06-03-2025</span></Clock>
          </Tray>
        </TaskBar>
      </Desktop>
    </>
  );
}
